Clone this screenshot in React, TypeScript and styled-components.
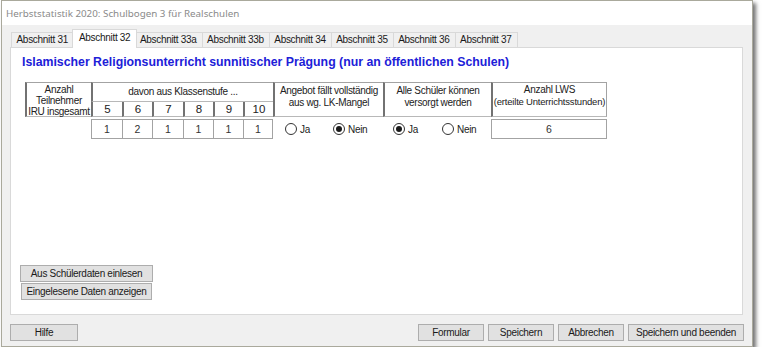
import React from 'react';
import styled, { createGlobalStyle } from 'styled-components';

const SMALL = `font-family: "Liberation Sans", Arial, sans-serif; font-size: 10px; letter-spacing: -0.3px;`;

const Global = createGlobalStyle`
  html, body { margin: 0; padding: 0; background: #ffffff; }
  body { font-family: "Liberation Sans", Arial, sans-serif; }
`;

const Window = styled.div`
  margin-left: 1px;
  width: 752px;
  height: 347px;
  box-sizing: border-box;
  border: 1px solid #aaa99c;
  background: #f0f0f0;
  box-shadow: 3px 3px 4px rgba(0, 0, 0, 0.55);
  display: flex;
  flex-direction: column;
`;

const TitleBar = styled.div`
  height: 24px;
  flex: none;
  background: #ffffff;
  display: flex;
  align-items: center;
  padding-left: 4px;
  font-family: "Noto Sans", sans-serif;
  font-size: 9.8px;
  color: #8a8a8a;
`;

const Client = styled.div`
  flex: 1;
  display: flex;
  flex-direction: column;
  padding: 4px 9px 5px 8px;
  min-height: 0;
`;

const TabStrip = styled.div`
  display: flex;
  align-items: flex-end;
  height: 18px;
  padding-left: 2px;
  flex: none;
`;

const Tab = styled.div<{ $active?: boolean }>`
  position: relative;
  box-sizing: border-box;
  height: ${p => (p.$active ? 19 : 15)}px;
  margin: 0 ${p => (p.$active ? -2 : 0)}px ${p => (p.$active ? -1 : 0)}px ${p => (p.$active ? -2 : -1)}px;
  padding: ${p => (p.$active ? '2px 6px 0' : '1px 5px 0 4.5px')};
  border: 1px solid #d9d9d9;
  border-bottom: none;
  background: ${p => (p.$active ? '#ffffff' : '#f0f0f0')};
  z-index: ${p => (p.$active ? 2 : 1)};
  ${SMALL}
  line-height: 12px;
  color: #1a1a1a;
  white-space: nowrap;
`;

const Panel = styled.div`
  height: 268px;
  flex: none;
  box-sizing: border-box;
  background: #ffffff;
  border: 1px solid #d9d9d9;
  padding: 0 9px 14px;
  display: flex;
  flex-direction: column;
`;

const Heading = styled.div`
  margin: 6px 0 0 2px;
  font-family: "Liberation Sans", Arial, sans-serif;
  font-weight: bold;
  font-size: 12.3px;
  line-height: 16px;
  color: #2020d8;
  white-space: nowrap;
`;

const Grid = styled.div`
  margin: 12px 0 0 5px;
  display: grid;
  grid-template-columns: 66px 31px 30px 31px 30px 30px 30px 110px 108px 116px;
  grid-template-rows: 20px 15px 2px 20px;
  width: max-content;
`;

const HeadCell = styled.div<{ $col: string; $row: string; $last?: boolean; $pt?: number; $lh?: number }>`
  grid-column: ${p => p.$col};
  grid-row: ${p => p.$row};
  box-sizing: border-box;
  border-top: 1px solid #a3a3a3;
  border-bottom: 1px solid #b8b8b8;
  border-left: 2px solid #727272;
  border-right: ${p => (p.$last ? '1px solid #a3a3a3' : 'none')};
  padding-top: ${p => p.$pt ?? 0}px;
  ${SMALL}
  line-height: ${p => p.$lh ?? 12}px;
  color: #222222;
  text-align: center;
  white-space: nowrap;
`;

const Digit = styled.div<{ $col: number }>`
  grid-column: ${p => p.$col};
  grid-row: 2;
  box-sizing: border-box;
  border-bottom: 1px solid #b8b8b8;
  border-left: 2px solid #727272;
  font-family: "Liberation Sans", Arial, sans-serif;
  font-size: 11.5px;
  line-height: 14px;
  color: #222222;
  text-align: center;
`;

const SmallLine = styled.span`
  display: block;
  font-size: 9.5px;
  line-height: 12px;
  letter-spacing: -0.2px;
`;

const DataCell = styled.div<{ $col: number; $right?: boolean }>`
  grid-column: ${p => p.$col};
  grid-row: 4;
  box-sizing: border-box;
  border: 1px solid #a3a3a3;
  border-right: ${p => (p.$right ? '1px solid #a3a3a3' : 'none')};
  background: #ffffff;
  font-family: "Liberation Sans", Arial, sans-serif;
  font-size: 10.5px;
  line-height: 18px;
  color: #333333;
  text-align: center;
`;

const RadioCell = styled.div<{ $col: number; $pad: number }>`
  grid-column: ${p => p.$col};
  grid-row: 4;
  display: flex;
  align-items: center;
  padding-left: ${p => p.$pad}px;
`;

const RadioOption = styled.label<{ $w: number }>`
  width: ${p => p.$w}px;
  display: flex;
  align-items: center;
  gap: 3px;
  ${SMALL}
  color: #222222;
`;

const RadioDot = styled.span<{ $on?: boolean }>`
  width: 12px;
  height: 12px;
  box-sizing: border-box;
  border: 1px solid #333333;
  border-radius: 50%;
  background: #ffffff;
  display: flex;
  align-items: center;
  justify-content: center;
  &::after {
    content: '';
    width: 6px;
    height: 6px;
    border-radius: 50%;
    background: ${p => (p.$on ? '#1a1a1a' : 'transparent')};
  }
`;

const SideButtons = styled.div`
  margin-top: auto;
  display: flex;
  flex-direction: column;
  gap: 1px;
  align-items: flex-start;
`;

const Button = styled.button<{ $w: number; $ml?: number }>`
  width: ${p => p.$w}px;
  height: 17px;
  margin-left: ${p => p.$ml ?? 0}px;
  padding: 0;
  box-sizing: border-box;
  background: #e1e1e1;
  border: 1px solid #adadad;
  border-radius: 0;
  ${SMALL}
  line-height: 15px;
  color: #1a1a1a;
  white-space: nowrap;
`;

const Footer = styled.div`
  margin-top: 9px;
  display: flex;
  align-items: center;
`;

const FooterRight = styled.div`
  margin-left: auto;
  margin-right: -1px;
  display: flex;
  gap: 4px;
`;

const tabs = ['Abschnitt 31', 'Abschnitt 32', 'Abschnitt 33a', 'Abschnitt 33b', 'Abschnitt 34', 'Abschnitt 35', 'Abschnitt 36', 'Abschnitt 37'];
const grades = ['5', '6', '7', '8', '9', '10'];
const counts = ['1', '2', '1', '1', '1', '1'];

export default function App() {
  return (
    <>
      <Global />
      <Window>
        <TitleBar>Herbststatistik 2020: Schulbogen 3 für Realschulen</TitleBar>
        <Client>
          <TabStrip>
            {tabs.map(t => (
              <Tab key={t} $active={t === 'Abschnitt 32'}>{t}</Tab>
            ))}
          </TabStrip>
          <Panel>
            <Heading>Islamischer Religionsunterricht sunnitischer Prägung (nur an öffentlichen Schulen)</Heading>
            <Grid>
              <HeadCell $col="1" $row="1 / 3" $pt={1} $lh={11}>
                Anzahl<br />Teilnehmer<br />IRU insgesamt
              </HeadCell>
              <HeadCell $col="2 / 8" $row="1" $lh={18}>davon aus Klassenstufe ...</HeadCell>
              {grades.map((g, i) => (
                <Digit key={g} $col={i + 2}>{g}</Digit>
              ))}
              <HeadCell $col="8" $row="1 / 3" $pt={2}>
                Angebot fällt vollständig<br />aus wg. LK-Mangel
              </HeadCell>
              <HeadCell $col="9" $row="1 / 3" $pt={2}>
                Alle Schüler können<br />versorgt werden
              </HeadCell>
              <HeadCell $col="10" $row="1 / 3" $pt={1} $last>
                Anzahl LWS
                <SmallLine>(erteilte Unterrichtsstunden)</SmallLine>
              </HeadCell>
              {counts.map((c, i) => (
                <DataCell key={i} $col={i + 2} $right={i === 5}>{c}</DataCell>
              ))}
              <RadioCell $col={8} $pad={12}>
                <RadioOption $w={48}><RadioDot />Ja</RadioOption>
                <RadioOption $w={48}><RadioDot $on />Nein</RadioOption>
              </RadioCell>
              <RadioCell $col={9} $pad={10}>
                <RadioOption $w={50}><RadioDot $on />Ja</RadioOption>
                <RadioOption $w={50}><RadioDot />Nein</RadioOption>
              </RadioCell>
              <DataCell $col={10} $right>6</DataCell>
            </Grid>
            <SideButtons>
              <Button $w={133}>Aus Schülerdaten einlesen</Button>
              <Button $w={131} $ml={1}>Eingelesene Daten anzeigen</Button>
            </SideButtons>
          </Panel>
          <Footer>
            <Button $w={68}>Hilfe</Button>
            <FooterRight>
              <Button $w={66}>Formular</Button>
              <Button $w={66}>Speichern</Button>
              <Button $w={66}>Abbrechen</Button>
              <Button $w={116}>Speichern und beenden</Button>
            </FooterRight>
          </Footer>
        </Client>
      </Window>
    </>
  );
}
